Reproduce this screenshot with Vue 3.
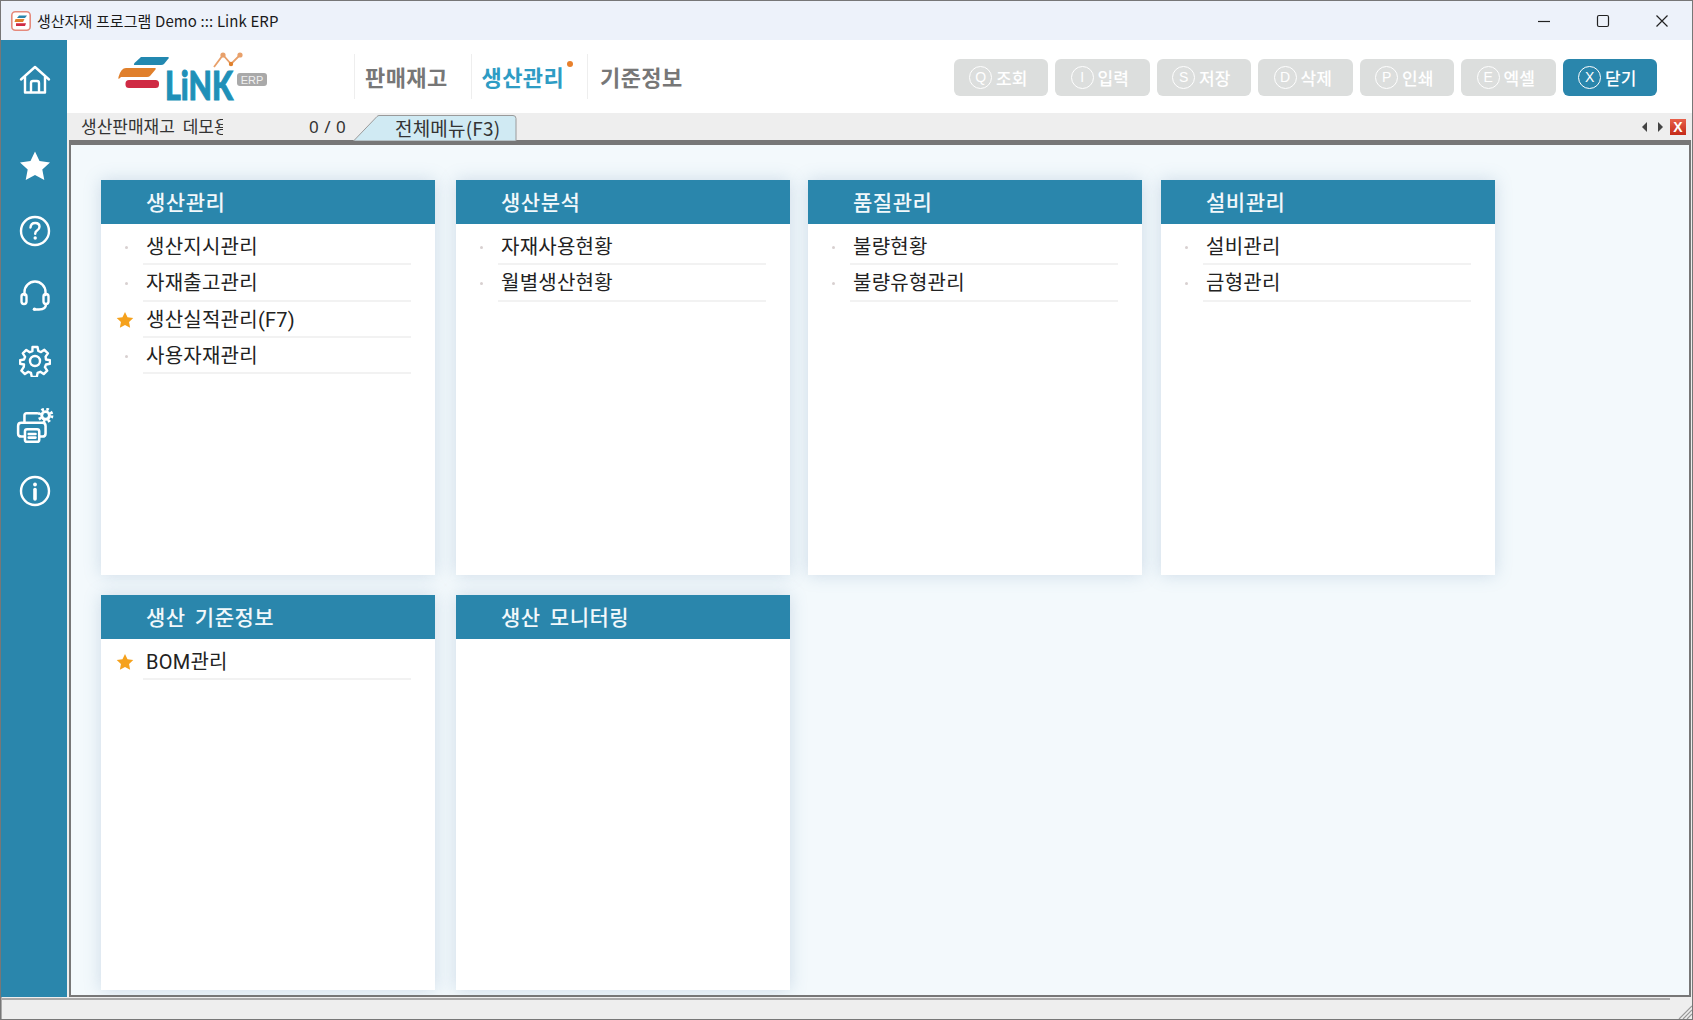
<template>
  <div class="window">
    <header class="titlebar">
      <svg class="app-icon" viewBox="0 0 20 20">
        <rect x="0.8" y="0.8" width="18.400" height="18.400" rx="3.500" fill="#fff" stroke="#e58a7c" stroke-width="1.600" />
        <path d="M8 4.500h8l-2 2.500H6z" fill="#2a86ac" />
        <path d="M4.500 8h9l-1.500 3H3.500z" fill="#e0802c" />
        <path d="M5 12.200h10l-1 2.800H5z" fill="#cf2a44" />
      </svg>
      <span class="app-title">생산자재 프로그램 Demo ::: Link ERP</span>
      <div class="win-controls">
        <svg viewBox="0 0 14 14"><path d="M1 7.500h12" /></svg>
        <svg viewBox="0 0 14 14"><rect x="1.500" y="1.500" width="11" height="11" rx="1.500" /></svg>
        <svg viewBox="0 0 14 14"><path d="M1.500 1.500l11 11M12.500 1.500l-11 11" /></svg>
      </div>
    </header>

    <div class="main">
      <aside class="sidebar">
        <svg class="side-icon home" viewBox="0 0 32 32">
          <path d="M2 15.500 16 3l14 12.500" />
          <path d="M6 13v15.500h20V13" />
          <path d="M12 28v-9q0-2 2-2h4q2 0 2 2v9" />
        </svg>
        <svg class="side-icon" viewBox="0 0 32 32">
          <path class="solid" d="M16 1.500l4.500 9.600 10.500 1.300-7.700 7.200 2 10.400L16 25l-9.300 5 2-10.400L1 12.400l10.500-1.300z" />
        </svg>
        <svg class="side-icon" viewBox="0 0 32 32">
          <circle cx="16" cy="16" r="14" />
          <path d="M11.500 12.500q.3-4.500 4.700-4.500 4.300 0 4.300 3.800 0 2.300-2.400 3.700-1.900 1.100-1.900 3.200" />
          <circle class="solid" cx="16.200" cy="23" r="1.700" />
        </svg>
        <svg class="side-icon" viewBox="0 0 32 32">
          <path d="M5.500 15v-3a10.500 10.500 0 0 1 21 0v3" />
          <rect x="2.500" y="14" width="5" height="10" rx="2.500" />
          <rect x="24.500" y="14" width="5" height="10" rx="2.500" />
          <path d="M27 24q0 5.500-7 5.500h-3" />
          <circle class="solid" cx="15.500" cy="29.300" r="1.800" />
        </svg>
        <svg class="side-icon" viewBox="0 0 32 32">
          <circle cx="16" cy="16" r="5" />
          <path d="M13.500 2h5l.8 4 2.700 1.100 3.400-2.300 3.500 3.500-2.300 3.400L27 14.500l4 .8v3.400l-4 .8-1.100 2.700 2.300 3.400-3.500 3.500-3.400-2.300-2.700 1.100-.8 4h-5l-.8-4-2.700-1.100-3.400 2.300-3.500-3.500 2.300-3.400L5 19.500l-4-.8v-3.400l4-.8 1.100-2.700-2.300-3.400 3.500-3.500 3.400 2.300 2.700-1.100z" />
        </svg>
        <svg class="side-icon printer" viewBox="0 0 36 34">
          <path d="M8 14V7q0-2 2-2h10" />
          <path d="M8 27H5q-3 0-3-3v-7q0-3 3-3h20q3 0 3 3v7q0 3-3 3h-3" />
          <rect x="8.500" y="20" width="13.500" height="12" rx="2" />
          <path d="M12 24.500h6.500M12 28h6.500" />
          <circle class="solid" cx="28" cy="7" r="5" />
          <circle class="teeth" cx="28" cy="7" r="6" />
          <circle class="hole" cx="28" cy="7" r="2.200" />
        </svg>
        <svg class="side-icon" viewBox="0 0 32 32">
          <circle cx="16" cy="16" r="14" />
          <circle class="solid" cx="16" cy="9.500" r="1.900" />
          <path class="thick" d="M16 14.500v9.500" />
        </svg>
      </aside>

      <div class="right">
        <div class="toolbar">
          <svg class="logo" viewBox="0 0 155 50">
            <path d="M26 5h27q1.500 0 .5 1.500L49 12q-1 1-3 1H20q-2 0-.5-2z" fill="#2288b0" />
            <path d="M11 16h29q1.500 0 .5 1.500L35 24q-1 1-3 1H6q-2.500 2-2 2-1 0-.5-2Q6 16 11 16z" fill="#e0802c" />
            <rect x="10.500" y="28" width="33.500" height="8" rx="3.500" fill="#cf2a44" />
            <text x="50" y="48" class="logo-word" textLength="68" lengthAdjust="spacingAndGlyphs">LiNK</text>
            <path d="M99 15l9-12 8 9 9-9" fill="none" stroke="#e8a06a" stroke-width="1.800" />
            <circle cx="108" cy="3" r="2.600" fill="#e8a06a" />
            <circle cx="116" cy="12" r="2.200" fill="#e0802c" />
            <circle cx="125" cy="3" r="2.600" fill="#e8a06a" />
            <rect x="122" y="21" width="30" height="13" rx="3" fill="#a9a9a9" />
            <text x="137" y="31.500" class="logo-erp" text-anchor="middle">ERP</text>
          </svg>
          <nav class="topnav">
            <a v-for="item in topMenus" :key="item" class="topnav-item" :class="{ active: item === activeMenu }">{{ item }}</a>
          </nav>
          <div class="actions">
            <button v-for="btn in actions" :key="btn.key" class="action" :class="{ enabled: btn.enabled }">
              <span class="hotkey">{{ btn.key }}</span>{{ btn.label }}
            </button>
          </div>
        </div>

        <div class="tabbar">
          <span class="company">생산판매재고 데모용 업체</span>
          <span class="page-count">0 / 0</span>
          <div class="tab">
            <svg viewBox="0 0 164 26"><path d="M0.500 26 24 1.500q1-1 2-1h134q3 0 3 3V26z" fill="#d0eaf3" stroke="#9a9a9a" /></svg>
            <span>전체메뉴(F3)</span>
          </div>
          <div class="tab-tools">
            <i class="arrow-left"></i>
            <i class="arrow-right"></i>
            <span class="tab-close">X</span>
          </div>
        </div>

        <section class="content">
          <article v-for="group in groups" :key="group.title" class="card">
            <h2 class="card-title">{{ group.title }}</h2>
            <ul class="card-list">
              <li v-for="row in group.items" :key="row.name" class="card-row">
                <span class="mark">
                  <svg v-if="row.fav" viewBox="0 0 20 20"><path d="M10 1l2.800 6 6.400.8-4.700 4.400 1.200 6.500L10 15.500l-5.700 3.200 1.200-6.500L.8 7.800 7.200 7z" fill="#f5a11c" /></svg>
                  <i v-else class="dot"></i>
                </span>
                <span class="row-name">{{ row.name }}</span>
              </li>
            </ul>
          </article>
        </section>
      </div>
    </div>

    <footer class="statusbar">
      <div class="status-line"></div>
      <svg class="grip" viewBox="0 0 14 14"><path d="M14 1 1 14M14 5 5 14M14 9 9 14" /></svg>
    </footer>
  </div>
</template>

<script setup>
const topMenus = ['판매재고', '생산관리', '기준정보']
const activeMenu = '생산관리'

const actions = [
  { key: 'Q', label: '조회' },
  { key: 'I', label: '입력' },
  { key: 'S', label: '저장' },
  { key: 'D', label: '삭제' },
  { key: 'P', label: '인쇄' },
  { key: 'E', label: '엑셀' },
  { key: 'X', label: '닫기', enabled: true }
]

const groups = [
  {
    title: '생산관리',
    items: [
      { name: '생산지시관리' },
      { name: '자재출고관리' },
      { name: '생산실적관리(F7)', fav: true },
      { name: '사용자재관리' }
    ]
  },
  { title: '생산분석', items: [{ name: '자재사용현황' }, { name: '월별생산현황' }] },
  { title: '품질관리', items: [{ name: '불량현황' }, { name: '불량유형관리' }] },
  { title: '설비관리', items: [{ name: '설비관리' }, { name: '금형관리' }] },
  { title: '생산 기준정보', items: [{ name: 'BOM관리', fav: true }] },
  { title: '생산 모니터링', items: [] }
]
</script>

<style>
html,
body {
  margin: 0;
  overflow: hidden;
}
</style>

<style scoped>
.window {
  width: 1693px;
  height: 1020px;
  box-sizing: border-box;
  border: 1px solid #777;
  display: flex;
  flex-direction: column;
  font-family: "Noto Sans CJK KR", "Noto Sans", sans-serif;
  color: #222;
  background: #eee;
  overflow: hidden;
}

.titlebar {
  height: 39px;
  flex: none;
  display: flex;
  align-items: center;
  background: #edf2fa;
  padding-left: 10px;
}

.app-icon {
  width: 20px;
  height: 20px;
  margin-right: 6px;
}

.app-title {
  font-size: 15px;
  word-spacing: 0.500px;
  color: #1a1a1a;
}

.win-controls {
  margin-left: auto;
  display: flex;
  gap: 45px;
  padding-right: 23px;
}

.win-controls svg {
  width: 14px;
  height: 14px;
  fill: none;
  stroke: #222;
  stroke-width: 1.200;
}

.main {
  flex: 1;
  min-height: 0;
  display: flex;
}

.sidebar {
  width: 66px;
  flex: none;
  background: #2a86ac;
  display: flex;
  flex-direction: column;
  align-items: center;
  padding: 24px 0 0 2px;
  box-sizing: border-box;
  gap: 33px;
}

.side-icon {
  width: 32px;
  height: 32px;
  fill: none;
  stroke: #fff;
  stroke-width: 2.400;
  stroke-linecap: round;
  stroke-linejoin: round;
}

.side-icon .solid {
  fill: #fff;
  stroke: none;
}

.side-icon .teeth {
  stroke-width: 2.800;
  stroke-linecap: butt;
  stroke-dasharray: 2.400 2.312;
}

.side-icon .hole {
  fill: #2a86ac;
  stroke: none;
}

.side-icon .thick {
  stroke-width: 3.600;
}

.side-icon.home {
  margin-bottom: 21px;
}

.side-icon.printer {
  width: 38px;
  height: 36px;
  margin: -2px 0;
}

.right {
  flex: 1;
  min-width: 0;
  display: flex;
  flex-direction: column;
}

.toolbar {
  height: 73px;
  flex: none;
  background: #fff;
  display: flex;
  align-items: center;
}

.logo {
  width: 155px;
  height: 50px;
  margin-left: 48px;
  flex: none;
}

.logo-word {
  font-family: Lato, sans-serif;
  font-weight: 900;
  font-size: 40px;
  fill: #2090b8;
  stroke: #2090b8;
  stroke-width: 1;
}

.logo-erp {
  font-family: "Liberation Sans", sans-serif;
  font-size: 11px;
  fill: #f0f0f0;
}

.topnav {
  display: flex;
  margin-left: 84px;
}

.topnav-item {
  width: 116.500px;
  height: 45px;
  box-sizing: border-box;
  border-left: 1px solid #eee;
  padding-left: 10px;
  line-height: 45px;
  font-size: 22px;
  letter-spacing: 0.400px;
  font-weight: 700;
  color: #777;
  position: relative;
}

.topnav-item:last-child {
  padding-left: 12px;
}

.topnav-item.active {
  color: #2e9cc4;
}

.topnav-item.active::after {
  content: "";
  position: absolute;
  left: 95px;
  top: 7px;
  width: 6px;
  height: 6px;
  border-radius: 50%;
  background: #e8802c;
}

.actions {
  margin: 1px 0 0 auto;
  padding-right: 35px;
  display: flex;
  gap: 7px;
}

.action {
  width: 94.500px;
  height: 37px;
  border: none;
  border-radius: 6px;
  background: #dcdedd;
  color: #fff;
  font-family: inherit;
  font-size: 17px;
  font-weight: 500;
  display: flex;
  align-items: center;
  justify-content: center;
  gap: 4px;
  padding: 0 5px 0 0;
}

.action.enabled {
  background: #2a86ac;
}

.hotkey {
  flex: none;
  width: 23px;
  height: 23px;
  box-sizing: border-box;
  border: 1.500px solid #fff;
  border-radius: 50%;
  font-family: "Liberation Sans", sans-serif;
  font-size: 14px;
  font-weight: 400;
  line-height: 20px;
  text-align: center;
}

.tabbar {
  height: 27px;
  flex: none;
  background: #eee;
  display: flex;
  align-items: flex-start;
  font-size: 17px;
  color: #333;
}

.company {
  width: 142px;
  margin-left: 14px;
  overflow: hidden;
  white-space: nowrap;
  line-height: 25px;
  word-spacing: 4px;
}

.page-count {
  margin-left: 86px;
  width: 44px;
  line-height: 27px;
  font-family: "Noto Sans", sans-serif;
  font-size: 17px;
  letter-spacing: 0.500px;
  white-space: nowrap;
}

.tab {
  position: relative;
  width: 164px;
  height: 26px;
  margin-top: 2px;
  flex: none;
}

.tab svg {
  position: absolute;
  inset: 0;
  width: 164px;
  height: 26px;
}

.tab span {
  position: relative;
  display: block;
  padding-left: 42px;
  font-size: 19px;
  letter-spacing: 0.200px;
  line-height: 26px;
  white-space: nowrap;
}

.tab-tools {
  margin-left: auto;
  padding: 6px 6px 0 0;
  display: flex;
  align-items: center;
}

.arrow-left,
.arrow-right {
  width: 0;
  height: 0;
  border-top: 5px solid transparent;
  border-bottom: 5px solid transparent;
}

.arrow-left {
  border-right: 5px solid #444;
  margin-right: 11px;
}

.arrow-right {
  border-left: 5px solid #444;
  margin-right: 7px;
}

.tab-close {
  width: 16px;
  height: 16px;
  background: linear-gradient(#e8604a, #c42a18);
  color: #fff;
  font-family: "Liberation Sans", sans-serif;
  font-size: 14px;
  font-weight: 700;
  line-height: 16px;
  text-align: center;
}

.content {
  flex: 1;
  min-height: 0;
  margin: 0 1px 0 2px;
  border: 2px solid #777;
  border-top-width: 5px;
  background: #f3f9fc;
  box-sizing: border-box;
  padding: 35px 0 0 30px;
  display: grid;
  grid-template-columns: 355px 352px 353px 334px;
  grid-auto-rows: 395px;
  row-gap: 20px;
  align-content: start;
  overflow: hidden;
}

.card {
  width: 334px;
  background: #fff;
  box-shadow: 0 0 16px rgba(90, 130, 170, 0.25);
}

.card-title {
  margin: 0;
  height: 44px;
  background: #2a86ac;
  color: #f2f8fb;
  font-size: 21px;
  font-weight: 500;
  letter-spacing: 0.500px;
  word-spacing: 4px;
  line-height: 43px;
  padding-left: 45px;
}

.card-list {
  list-style: none;
  margin: 0;
  padding: 5px 0 0 0;
}

.card-row {
  display: flex;
  align-items: center;
  height: 36.330px;
}

.mark {
  width: 42px;
  flex: none;
  display: flex;
  justify-content: center;
  padding-left: 5px;
  box-sizing: border-box;
}

.mark svg {
  width: 18px;
  height: 18px;
}

.dot {
  width: 3px;
  height: 3px;
  background: #d8d0d0;
  border-radius: 50%;
  margin-left: 3px;
}

.row-name {
  width: 268px;
  height: 100%;
  box-sizing: border-box;
  border-bottom: 2px solid #f2f2f2;
  padding-left: 3px;
  font-family: Roboto, "Noto Sans CJK KR", sans-serif;
  font-size: 20px;
  letter-spacing: 0.250px;
  line-height: 37px;
  color: #222;
  white-space: nowrap;
}

.statusbar {
  height: 22px;
  flex: none;
  position: relative;
  background: #eee;
  border-left: 1px solid #aaa;
}

.status-line {
  height: 2px;
  width: 1668px;
  margin-top: 1px;
  background: #aaa;
}

.grip {
  position: absolute;
  right: 0;
  bottom: 0;
  width: 14px;
  height: 14px;
  fill: none;
  stroke: #999;
  stroke-width: 1.200;
}
</style>
